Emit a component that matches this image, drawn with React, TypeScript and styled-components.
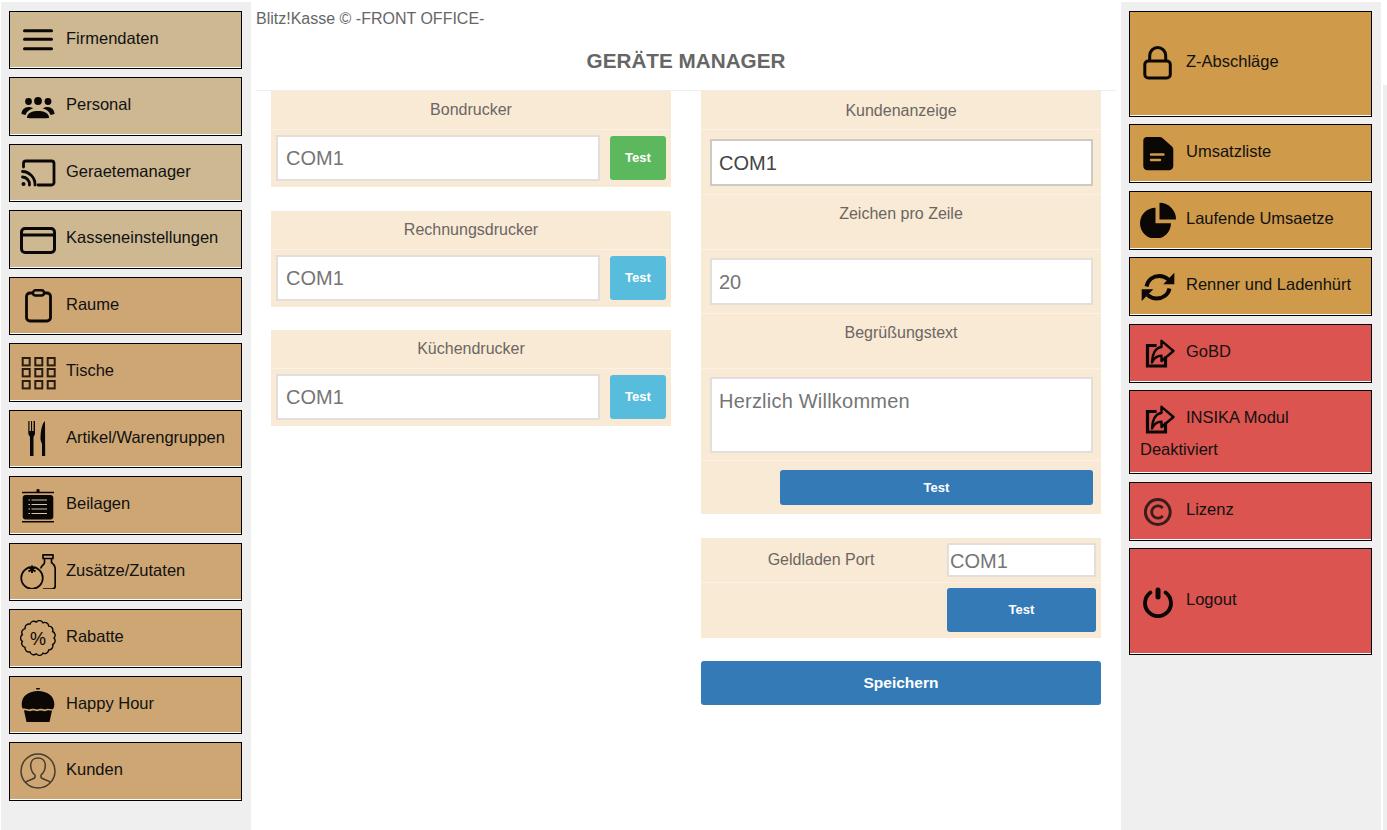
import React from "react";
import styled, { createGlobalStyle } from "styled-components";

const Global = createGlobalStyle`
  html, body { margin: 0; padding: 0; height: 100%; background: #fff; overflow: hidden; }
  * { box-sizing: border-box; }
  body { font-family: "Liberation Sans", Arial, sans-serif; }
`;

const Page = styled.div`
  display: flex;
  width: 1387px;
  height: 830px;
  padding-left: 1px;
`;

const Sidebar = styled.nav<{ $w: number; $top: number }>`
  width: ${(p) => p.$w}px;
  flex: none;
  margin-top: 2px;
  padding: ${(p) => p.$top}px 0 0 8px;
  background: #efefef;
  display: flex;
  flex-direction: column;
`;

const Strip = styled.div`
  flex: none;
  width: 4px;
  margin: 85px 0 0 2px;
  background: #eeeeee;
`;

const tones = {
  sand: "#cdb892",
  tan: "#cda673",
  gold: "#cf9a49",
  red: "#db5450",
};

const NavButton = styled.div<{ $tone: keyof typeof tones; $w: number; $h: number; $gap: number; $wrap?: boolean }>`
  flex: none;
  width: ${(p) => p.$w}px;
  height: ${(p) => p.$h}px;
  margin-bottom: ${(p) => p.$gap}px;
  background: ${(p) => tones[p.$tone]};
  border: 1px solid #000;
  box-shadow: inset 0 -1px 0 #fff;
  color: #111;
  font-size: 16.5px;
  display: flex;
  align-items: ${(p) => (p.$wrap ? "flex-start" : "center")};
  align-content: flex-start;
  flex-wrap: ${(p) => (p.$wrap ? "wrap" : "nowrap")};
  padding: ${(p) => (p.$wrap ? "10px 10px 0" : "0 10px 2px")};
`;

const IconBox = styled.span`
  flex: none;
  width: 36px;
  height: 36px;
  margin-right: 10px;
  display: flex;
  align-items: center;
  justify-content: center;
  svg { display: block; }
`;

const NavLabel = styled.span<{ $mb: number }>`
  white-space: nowrap;
  margin-bottom: ${(p) => p.$mb}px;
`;

const WrapLabel = styled.span`
  white-space: nowrap;
  line-height: 33px;
`;

const SubLine = styled.span`
  width: 100%;
  line-height: 25px;
`;

const Center = styled.main`
  flex: none;
  width: 870px;
  display: flex;
  flex-direction: column;
`;

const Header = styled.header`
  height: 91px;
  margin: 0 5px;
  border-bottom: 1px solid #eeeeee;
  color: #666;
`;

const Brand = styled.div`
  font-size: 16px;
  line-height: 37px;
`;

const Title = styled.h1`
  margin: 0;
  font-size: 20.7px;
  line-height: 48px;
  font-weight: 700;
  text-align: center;
`;

const Columns = styled.div`
  display: flex;
  gap: 30px;
  padding-left: 20px;
`;

const Column = styled.div`
  width: 400px;
  display: flex;
  flex-direction: column;
`;

const Panel = styled.section<{ $mt?: number }>`
  margin-top: ${(p) => p.$mt ?? 0}px;
  background: #f9ead6;
  display: flex;
  flex-direction: column;
`;

const Row = styled.div<{ $h: number; $pad?: string; $end?: boolean; $line?: boolean }>`
  height: ${(p) => p.$h}px;
  padding: ${(p) => p.$pad ?? "0"};
  display: flex;
  justify-content: ${(p) => (p.$end ? "flex-end" : "flex-start")};
  align-items: flex-start;
  border-bottom: ${(p) => (p.$line === false ? "none" : "1px solid #fcf1e4")};
`;

const Label = styled.div<{ $lh: number; $w?: number }>`
  width: ${(p) => (p.$w ? `${p.$w}px` : "100%")};
  flex: none;
  color: #6b6661;
  font-size: 16px;
  line-height: ${(p) => p.$lh}px;
  text-align: center;
`;

const TextBox = styled.input<{ $h: number; $w: number; $pad?: number; $focus?: boolean; $shift?: number; $ml?: number }>`
  display: block;
  flex: none;
  width: ${(p) => p.$w}px;
  height: ${(p) => p.$h}px;
  margin-left: ${(p) => p.$ml ?? 0}px;
  padding: ${(p) => p.$shift ?? 0}px ${(p) => p.$pad ?? 8}px 0;
  border: 2px solid ${(p) => (p.$focus ? "#cfc9c4" : "#e2dedb")};
  border-radius: 0;
  outline: none;
  background: #fff;
  color: ${(p) => (p.$focus ? "#444" : "#757575")};
  font: 20px "Liberation Sans", Arial, sans-serif;
`;

const TextArea = styled.textarea`
  display: block;
  width: 383px;
  height: 76px;
  padding: 10px 7px;
  border: 2px solid #e2dedb;
  border-radius: 0;
  outline: none;
  resize: none;
  overflow: hidden;
  background: #fff;
  color: #757575;
  font: 20px/24px "Liberation Sans", Arial, sans-serif;
  letter-spacing: 0.22px;
`;

const btn = { green: "#5cb85c", info: "#58bcdd", blue: "#337ab7" };

const Button = styled.button<{ $kind: keyof typeof btn; $w: number; $h: number; $ml?: number; $mt?: number; $pb?: number }>`
  flex: none;
  width: ${(p) => p.$w}px;
  height: ${(p) => p.$h}px;
  margin-left: ${(p) => p.$ml ?? 0}px;
  margin-top: ${(p) => p.$mt ?? 0}px;
  border: none;
  border-radius: 3px;
  background: ${(p) => btn[p.$kind]};
  color: #fff;
  font: 700 13px "Liberation Sans", Arial, sans-serif;
  padding: 0 0 ${(p) => p.$pb ?? 2}px;
`;

const Save = styled.button`
  width: 400px;
  height: 44px;
  margin-top: 23px;
  border: none;
  border-radius: 3px;
  background: #337ab7;
  color: #fff;
  font: 700 15.5px "Liberation Sans", Arial, sans-serif;
  padding: 0 0 1px;
`;

/* ---------- drawings ---------- */
const Svg = ({ children }: { children: React.ReactNode }) => (
  <svg width="36" height="36" viewBox="0 0 36 36" fill="none">{children}</svg>
);

const scallop = (() => {
  let d = "";
  const n = 15;
  for (let i = 0; i < n; i++) {
    const a0 = (i / n) * Math.PI * 2;
    const a1 = ((i + 1) / n) * Math.PI * 2;
    const R = 16;
    const x0 = 18 + R * Math.cos(a0), y0 = 18 + R * Math.sin(a0);
    const x1 = 18 + R * Math.cos(a1), y1 = 18 + R * Math.sin(a1);
    if (i === 0) d += `M${x0.toFixed(2)} ${y0.toFixed(2)}`;
    d += ` A4 4 0 0 1 ${x1.toFixed(2)} ${y1.toFixed(2)}`;
  }
  return d + "Z";
})();

const k = "#0a0705";

const icons: Record<string, React.ReactNode> = {
  bars: (
    <Svg>
      <path d="M4.5 9.8H31.5M4.5 18.3H31.5M4.5 27.8H31.5" stroke={k} strokeWidth="3" strokeLinecap="round" />
    </Svg>
  ),
  people: (
    <Svg>
      <g fill={k}>
        <circle cx="8.5" cy="13.5" r="3.4" /><circle cx="18" cy="13" r="3.9" /><circle cx="28" cy="13.5" r="3.4" />
        <path d="M7 30c0-1 0-7 11-7s11 6 11 7c0 0-3 .3-11 .3S7 30 7 30Z" />
        <path d="M1.5 26c0-4 3-7 7-7 2 0 3.5.5 4.5 1.5-4 1.2-6.5 3-7.5 6.5Z" />
        <path d="M34.5 26c0-4-3-7-7-7-2 0-3.5.5-4.5 1.5 4 1.2 6.5 3 7.5 6.5Z" />
      </g>
    </Svg>
  ),
  cast: (
    <Svg>
      <path d="M3.5 13V9.5A2.5 2.5 0 0 1 6 7H31.5A2.5 2.5 0 0 1 34 9.5V28.5A2.5 2.5 0 0 1 31.5 31H18" stroke={k} strokeWidth="2.8" strokeLinecap="round" />
      <path d="M2.5 17.5A13 13 0 0 1 15 31" stroke={k} strokeWidth="2.8" strokeLinecap="round" />
      <path d="M2.5 23A7.5 7.5 0 0 1 9.5 31" stroke={k} strokeWidth="2.8" strokeLinecap="round" />
      <circle cx="3.5" cy="30" r="2" fill={k} />
    </Svg>
  ),
  card: (
    <Svg>
      <rect x="1.5" y="7.5" width="33" height="24" rx="3.5" stroke={k} strokeWidth="3" />
      <path d="M1.5 14H34.5" stroke={k} strokeWidth="3" />
    </Svg>
  ),
  clipboard: (
    <Svg>
      <path d="M13 6H10A3.5 3.5 0 0 0 6.5 9.5V30.5A3.5 3.5 0 0 0 10 34H27A3.5 3.5 0 0 0 30.5 30.5V9.5A3.5 3.5 0 0 0 27 6H24" stroke={k} strokeWidth="2.8" />
      <rect x="13" y="3.3" width="11" height="5.2" rx="2.6" stroke={k} strokeWidth="2.4" />
    </Svg>
  ),
  grid: (
    <Svg>
      {[4, 15, 27].map((y) =>
        [2.7, 15.3, 27.7].map((x) => (
          <rect key={`${x}-${y}`} x={x} y={y} width="7" height="7.4" stroke="#2a1d10" strokeWidth="2" />
        ))
      )}
    </Svg>
  ),
  cutlery: (
    <Svg>
      <path fill={k} d="M8.3 1H9.5V11H11V1H12.1V11H13.6V1H15V14L13.5 17V37H10V17L8.3 14Z" />
      <path fill={k} d="M25 1C22.5 3 20.5 9 20.5 20L22 24V37H25.2Z" />
    </Svg>
  ),
  pot: (
    <Svg>
      <path d="M2 5.5H34M2 34.8H34" stroke={k} strokeWidth="1.4" />
      <rect x="16.5" y="2" width="3" height="4" rx="1.2" fill={k} />
      <rect x="2.7" y="8" width="30.6" height="24.5" rx="3" fill={k} />
      <path d="M11.5 13H27M11.5 17.5H27M11.5 22H27M11.5 26.5H27M8.5 13H10M8.5 17.5H10M8.5 22H10M8.5 26.5H10" stroke="#d8c4aa" strokeWidth="1" />
    </Svg>
  ),
  tomato: (
    <Svg>
      <g stroke={k} strokeWidth="1.7" strokeLinejoin="round">
        <path d="M23 5.5H33V1.8H23ZM24.5 5.5V9.5C24.5 12 21 12.5 20.8 15.5M31.5 5.5V9.5C33.5 11 35.2 13 35.2 16V33C35.2 35 34 36 32 36H23" />
        <circle cx="12" cy="25" r="10.8" />
      </g>
      <path d="M12 12.5V20M8.5 14L15.5 18.5M15.5 14L8.5 18.5" stroke={k} strokeWidth="2" />
    </Svg>
  ),
  percent: (
    <Svg>
      <path d={scallop} stroke={k} strokeWidth="1.4" />
      <text x="18" y="24.5" textAnchor="middle" fontSize="18" fontFamily="'Liberation Sans', Arial, sans-serif" fill={k}>%</text>
    </Svg>
  ),
  cupcake: (
    <Svg>
      <rect x="16" y="2" width="4" height="1.6" rx=".8" fill={k} />
      <path fill={k} d="M1.7 18C1.7 10 9 5 18 5S34.3 10 34.3 18C34.3 20 34 21.5 33.3 22.8C31 24.3 29 21.8 26.5 23C24 24.3 22 21.8 19 23C16 24.3 14 21.8 11 23C8.5 24.3 6 21.8 2.8 22.8C2 21.5 1.7 20 1.7 18Z" />
      <path fill={k} d="M4 24.5C7 23.7 9 26 11.5 24.8C14 23.7 16 26 19 24.8C21.5 23.7 24 26 26.5 24.8C29 23.7 30.5 25 32 24.5L29.5 36H6.5Z" />
    </Svg>
  ),
  user: (
    <Svg>
      <circle cx="18" cy="18" r="17" stroke="#473c2e" strokeWidth="1.5" />
      <path d="M5.5 29.5C7.5 27 13.5 26.5 15 24.5V22C12 19.5 10.7 16 10.7 12.5C10.7 7.5 14 5 18 5S25.3 7.5 25.3 12.5C25.3 16 24 19.5 21 22V24.5C22.5 26.5 28.5 27 30.5 29.5" stroke="#473c2e" strokeWidth="1.5" />
    </Svg>
  ),
  lock: (
    <Svg>
      <rect x="4.8" y="16" width="25.5" height="17" rx="3.5" stroke={k} strokeWidth="3" />
      <path d="M9.7 16V10.5A8 8 0 0 1 25.7 10.5V16" stroke={k} strokeWidth="3" />
    </Svg>
  ),
  file: (
    <Svg>
      <path fill={k} d="M7 2H19.5C21 2 22 2.5 23 3.5L32 11.5C33 12.5 33.3 13.5 33.3 15V31C33.3 33.5 31.5 35.3 29 35.3H7.5C5 35.3 3.3 33.5 3.3 31V5.5C3.3 3.5 5 2 7 2Z" />
      <path d="M11 19.5H23.5M11 25H20" stroke={tones.gold} strokeWidth="2.4" strokeLinecap="round" />
    </Svg>
  ),
  pie: (
    <Svg>
      <path fill={k} d="M19.5 .7A16.5 16.5 0 0 1 36 17.5H19.5Z" />
      <path fill={k} d="M15.5 5.7V21.2H31A15.5 15.5 0 1 1 15.5 5.7Z" />
    </Svg>
  ),
  refresh: (
    <Svg>
      <path d="M6.5 18.5C8 11.5 13.5 8 19.5 8C23 8 26 9.5 28.5 11.5" stroke={k} strokeWidth="4" />
      <path fill={k} d="M34.3 4.7V16.3H23.3Z" />
      <path d="M29.5 20.5C28 27 22.5 30.5 16.5 30.5C13 30.5 10 29 7.5 27" stroke={k} strokeWidth="4" />
      <path fill={k} d="M1.7 33V21.3H13.3Z" />
    </Svg>
  ),
  share: (
    <Svg>
      <path d="M15 10.5H7.5V31H25.5V23" stroke={k} strokeWidth="3.2" strokeLinecap="square" />
      <path d="M21.5 5.8L33.5 16L21.5 26V20.8C17.5 20.8 14 23 12 27.5C12 20 15 12.5 21.5 12Z" stroke={k} strokeWidth="2.4" strokeLinejoin="round" />
    </Svg>
  ),
  copyright: (
    <Svg>
      <circle cx="17.8" cy="19" r="12.4" stroke="#3a1d1b" strokeWidth="3" />
      <path d="M22.8 15.2A6.2 6.2 0 1 0 22.8 22.8" stroke="#3a1d1b" strokeWidth="2.8" />
    </Svg>
  ),
  power: (
    <Svg>
      <path d="M10.5 9.5A13 13 0 1 0 25.5 9.5" stroke={k} strokeWidth="3.8" strokeLinecap="round" />
      <path d="M18 7V14" stroke={k} strokeWidth="5" strokeLinecap="round" />
    </Svg>
  ),
};

type Item = { icon: string; label: string; tone: keyof typeof tones; h?: number; gap?: number; sub?: string; mb?: number };

const leftItems: Item[] = [
  { icon: "bars", label: "Firmendaten", tone: "sand" },
  { icon: "people", label: "Personal", tone: "sand" },
  { icon: "cast", label: "Geraetemanager", tone: "sand" },
  { icon: "card", label: "Kasseneinstellungen", tone: "sand" },
  { icon: "clipboard", label: "Raume", tone: "tan" },
  { icon: "grid", label: "Tische", tone: "tan" },
  { icon: "cutlery", label: "Artikel/Warengruppen", tone: "tan" },
  { icon: "pot", label: "Beilagen", tone: "tan" },
  { icon: "tomato", label: "Zusätze/Zutaten", tone: "tan" },
  { icon: "percent", label: "Rabatte", tone: "tan" },
  { icon: "cupcake", label: "Happy Hour", tone: "tan" },
  { icon: "user", label: "Kunden", tone: "tan" },
];

const rightItems: Item[] = [
  { icon: "lock", label: "Z-Abschläge", tone: "gold", h: 106, gap: 7, mb: 4 },
  { icon: "file", label: "Umsatzliste", tone: "gold", h: 59, gap: 8 },
  { icon: "pie", label: "Laufende Umsaetze", tone: "gold", h: 59, gap: 7 },
  { icon: "refresh", label: "Renner und Ladenhürt", tone: "gold", h: 59, gap: 8 },
  { icon: "share", label: "GoBD", tone: "red", h: 59, gap: 7 },
  { icon: "share", label: "INSIKA Modul", tone: "red", h: 84, gap: 8, sub: "Deaktiviert" },
  { icon: "copyright", label: "Lizenz", tone: "red", h: 59, gap: 7 },
  { icon: "power", label: "Logout", tone: "red", h: 107, gap: 0 },
];

const Nav = ({ item, w, h, gap, mb }: { item: Item; w: number; h: number; gap: number; mb: number }) => (
  <NavButton $tone={item.tone} $w={w} $h={item.h ?? h} $gap={item.gap ?? gap} $wrap={!!item.sub}>
    <IconBox>{icons[item.icon]}</IconBox>
    {item.sub ? <WrapLabel>{item.label}</WrapLabel> : <NavLabel $mb={item.mb ?? mb}>{item.label}</NavLabel>}
    {item.sub && <SubLine>{item.sub}</SubLine>}
  </NavButton>
);

const printers: { name: string; kind: "green" | "info"; mt: number }[] = [
  { name: "Bondrucker", kind: "green", mt: 0 },
  { name: "Rechnungsdrucker", kind: "info", mt: 24 },
  { name: "Küchendrucker", kind: "info", mt: 23 },
];

export default function App() {
  return (
    <>
      <Global />
      <Page>
        <Sidebar $w={250} $top={8.75}>
          {leftItems.map((it) => (
            <Nav key={it.label} item={it} w={233} h={58.5} gap={8} mb={1.5} />
          ))}
        </Sidebar>
        <Center>
          <Header>
            <Brand>Blitz!Kasse © -FRONT OFFICE-</Brand>
            <Title>GERÄTE MANAGER</Title>
          </Header>
          <Columns>
            <Column>
              {printers.map((p) => (
                <Panel key={p.name} $mt={p.mt}>
                  <Row $h={39}><Label $lh={38}>{p.name}</Label></Row>
                  <Row $h={57} $pad="5px 5px 0" $line={false}>
                    <TextBox $w={324} $h={46} value="COM1" readOnly />
                    <Button $kind={p.kind} $w={56} $h={44} $ml={10} $mt={1}>Test</Button>
                  </Row>
                </Panel>
              ))}
            </Column>
            <Column>
              <Panel>
                <Row $h={39}><Label $lh={39}>Kundenanzeige</Label></Row>
                <Row $h={65} $pad="9px 8px 0 9px">
                  <TextBox $w={383} $h={47} $pad={7} $shift={2} $focus value="COM1" readOnly />
                </Row>
                <Row $h={55}><Label $lh={37}>Zeichen pro Zeile</Label></Row>
                <Row $h={64} $pad="8px 8px 0 9px">
                  <TextBox $w={383} $h={47} $pad={7} $shift={2} value="20" readOnly />
                </Row>
                <Row $h={55}><Label $lh={37}>Begrüßungstext</Label></Row>
                <Row $h={92} $pad="8px 8px 0 9px">
                  <TextArea value="Herzlich Willkommen" readOnly />
                </Row>
                <Row $h={53} $pad="9px 8px 0 0" $end $line={false}>
                  <Button $kind="blue" $w={313} $h={35} $pb={1}>Test</Button>
                </Row>
              </Panel>
              <Panel $mt={24}>
                <Row $h={45} $pad="5px 5px 0 0">
                  <Label $w={240} $lh={33}>Geldladen Port</Label>
                  <TextBox $w={149} $h={34} $pad={1} $shift={2} $ml={6} value="COM1" readOnly />
                </Row>
                <Row $h={55} $pad="5px 5px 0 0" $end $line={false}>
                  <Button $kind="blue" $w={149} $h={44}>Test</Button>
                </Row>
              </Panel>
              <Save>Speichern</Save>
            </Column>
          </Columns>
        </Center>
        <Sidebar $w={260} $top={9}>
          {rightItems.map((it, i) => (
            <Nav key={`${it.label}-${i}`} item={it} w={243} h={59} gap={8} mb={2} />
          ))}
        </Sidebar>
        <Strip />
      </Page>
    </>
  );
}
